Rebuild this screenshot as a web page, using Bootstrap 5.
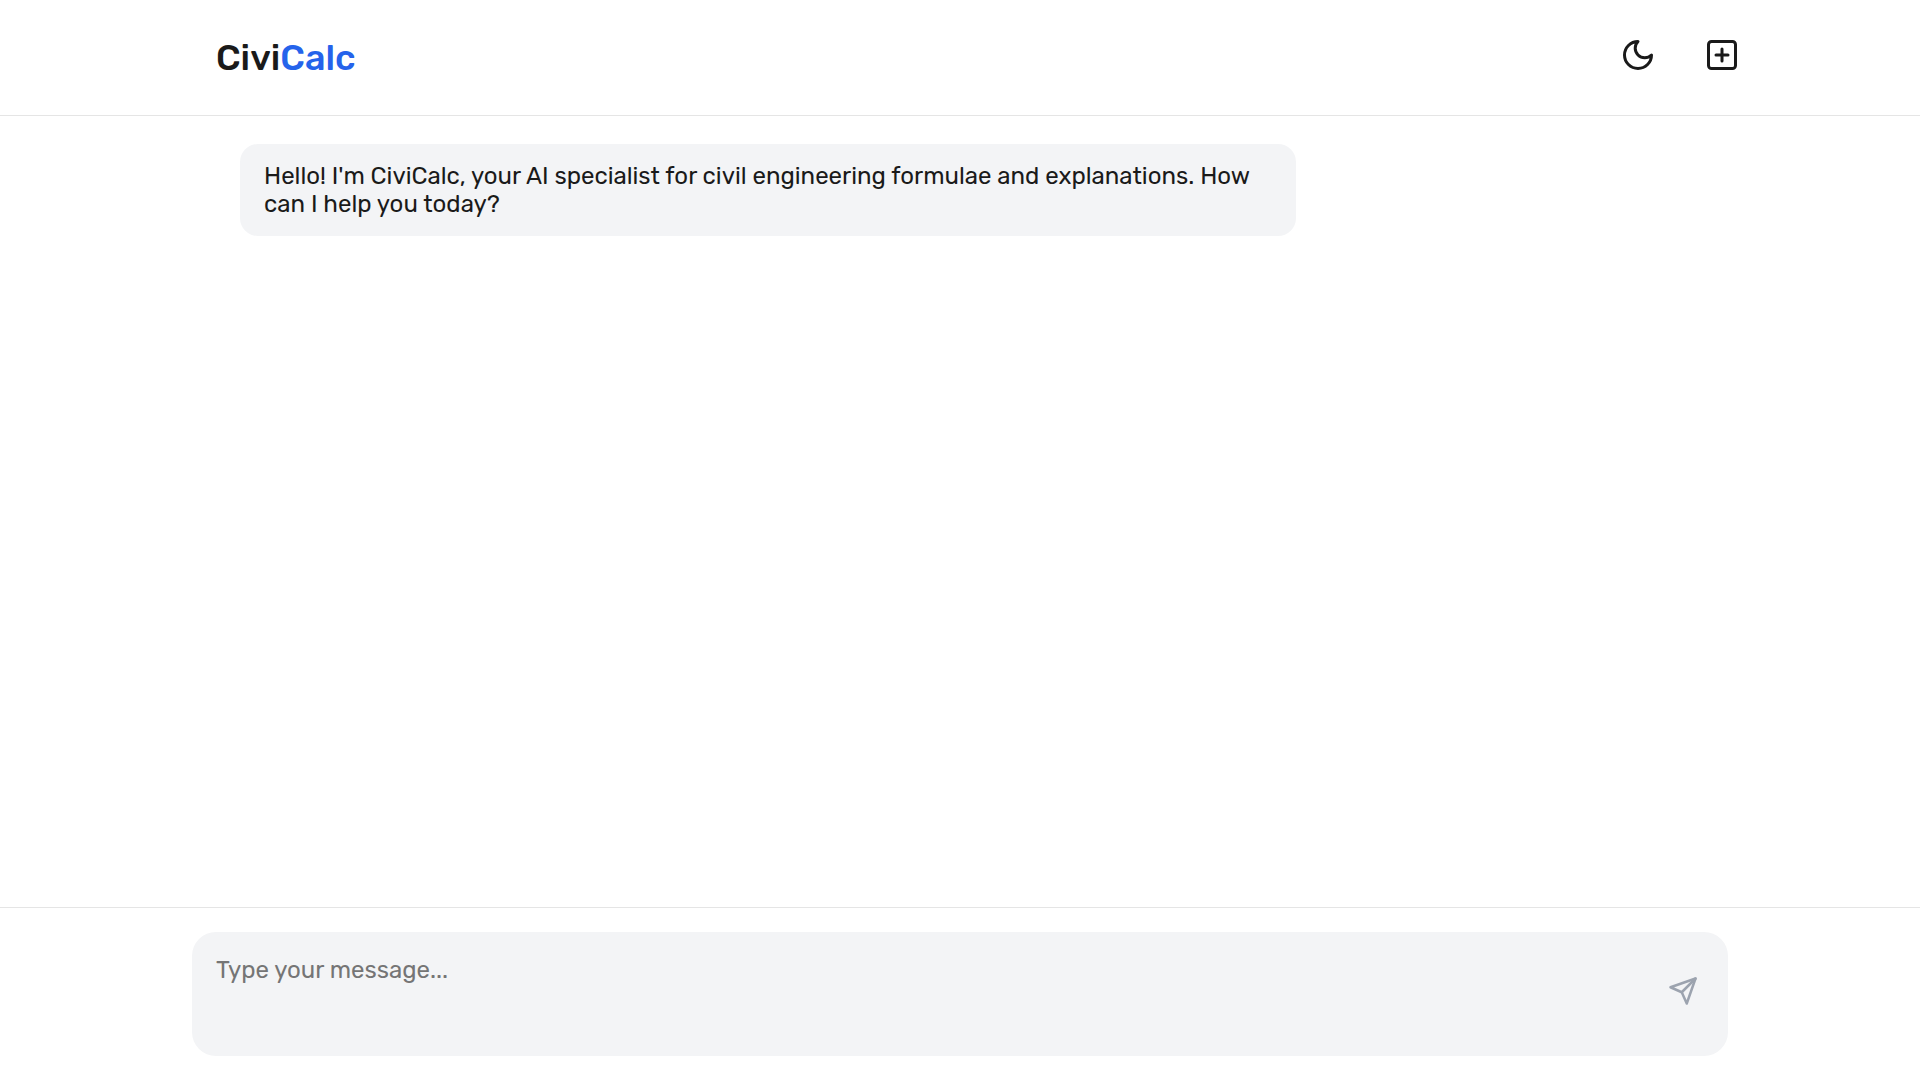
<!DOCTYPE html>
<html lang="en">
<head>
<meta charset="utf-8">
<meta name="viewport" content="width=device-width, initial-scale=1">
<title>CiviCalc</title>
<link href="https://cdn.jsdelivr.net/npm/bootstrap@5.3.0/dist/css/bootstrap.min.css" rel="stylesheet">
<style>
body { font-family: Rubik, Roboto, sans-serif; font-size: 24px; line-height: 28px; color: #1a1a1a; background: #fff; }
.top-bar { height: 116px; border-bottom: 1px solid #e5e5e5; padding: 0 180px 0 216px; }
.brand-name { font-size: 36px; line-height: 43px; font-weight: 500; }
.brand-accent { color: #2563eb; }
.tool-btn { color: #1a1a1a; line-height: 0; margin-bottom: 5px; }
.chat-area { padding: 28px 240px; }
.bubble { width: 1056px; padding: 18px 24px; border-radius: 18px; background: #f3f4f6; }
.composer { height: 173px; border-top: 1px solid #e5e5e5; padding: 24px 192px; }
.composer-box { height: 124px; border-radius: 24px; background: #f3f4f6; }
.message-input { resize: none; outline: 0; color: #1a1a1a; padding: 24px; line-height: 28px; }
.message-input::placeholder { color: #757575; }
.send-btn { color: #9ca3af; line-height: 0; margin: 0 30px 6px 0; }
</style>
</head>
<body class="vh-100 d-flex flex-column overflow-hidden">
<header class="top-bar d-flex align-items-center justify-content-between flex-shrink-0">
  <div class="brand-name">Civi<span class="brand-accent">Calc</span></div>
  <div class="d-flex gap-5">
    <button class="tool-btn btn p-0 border-0" aria-label="Toggle theme"><svg width="36" height="36" viewBox="0 0 24 24" fill="none" stroke="currentColor" stroke-width="2" stroke-linecap="round" stroke-linejoin="round"><path d="M12 3a6 6 0 0 0 9 9 9 9 0 1 1-9-9Z"/></svg></button>
    <button class="tool-btn btn p-0 border-0" aria-label="New chat"><svg width="36" height="36" viewBox="0 0 24 24" fill="none" stroke="currentColor" stroke-width="2" stroke-linecap="round" stroke-linejoin="round"><rect x="3" y="3" width="18" height="18" rx="2"/><path d="M8 12h8M12 8v8"/></svg></button>
  </div>
</header>
<main class="chat-area flex-grow-1">
  <div class="bubble">Hello! I'm CiviCalc, your AI specialist for civil engineering formulae and explanations. How can I help you today?</div>
</main>
<footer class="composer flex-shrink-0">
  <div class="composer-box d-flex align-items-center">
    <textarea class="message-input flex-grow-1 h-100 border-0 bg-transparent" placeholder="Type your message..."></textarea>
    <button class="send-btn btn p-0 border-0" aria-label="Send"><svg width="30" height="30" viewBox="0 0 24 24" fill="none" stroke="currentColor" stroke-width="2" stroke-linecap="round" stroke-linejoin="round"><path d="m22 2-7 20-4-9-9-4Z"/><path d="M22 2 11 13"/></svg></button>
  </div>
</footer>
<script src="https://cdn.jsdelivr.net/npm/bootstrap@5.3.0/dist/js/bootstrap.bundle.min.js"></script>
</body>
</html>
